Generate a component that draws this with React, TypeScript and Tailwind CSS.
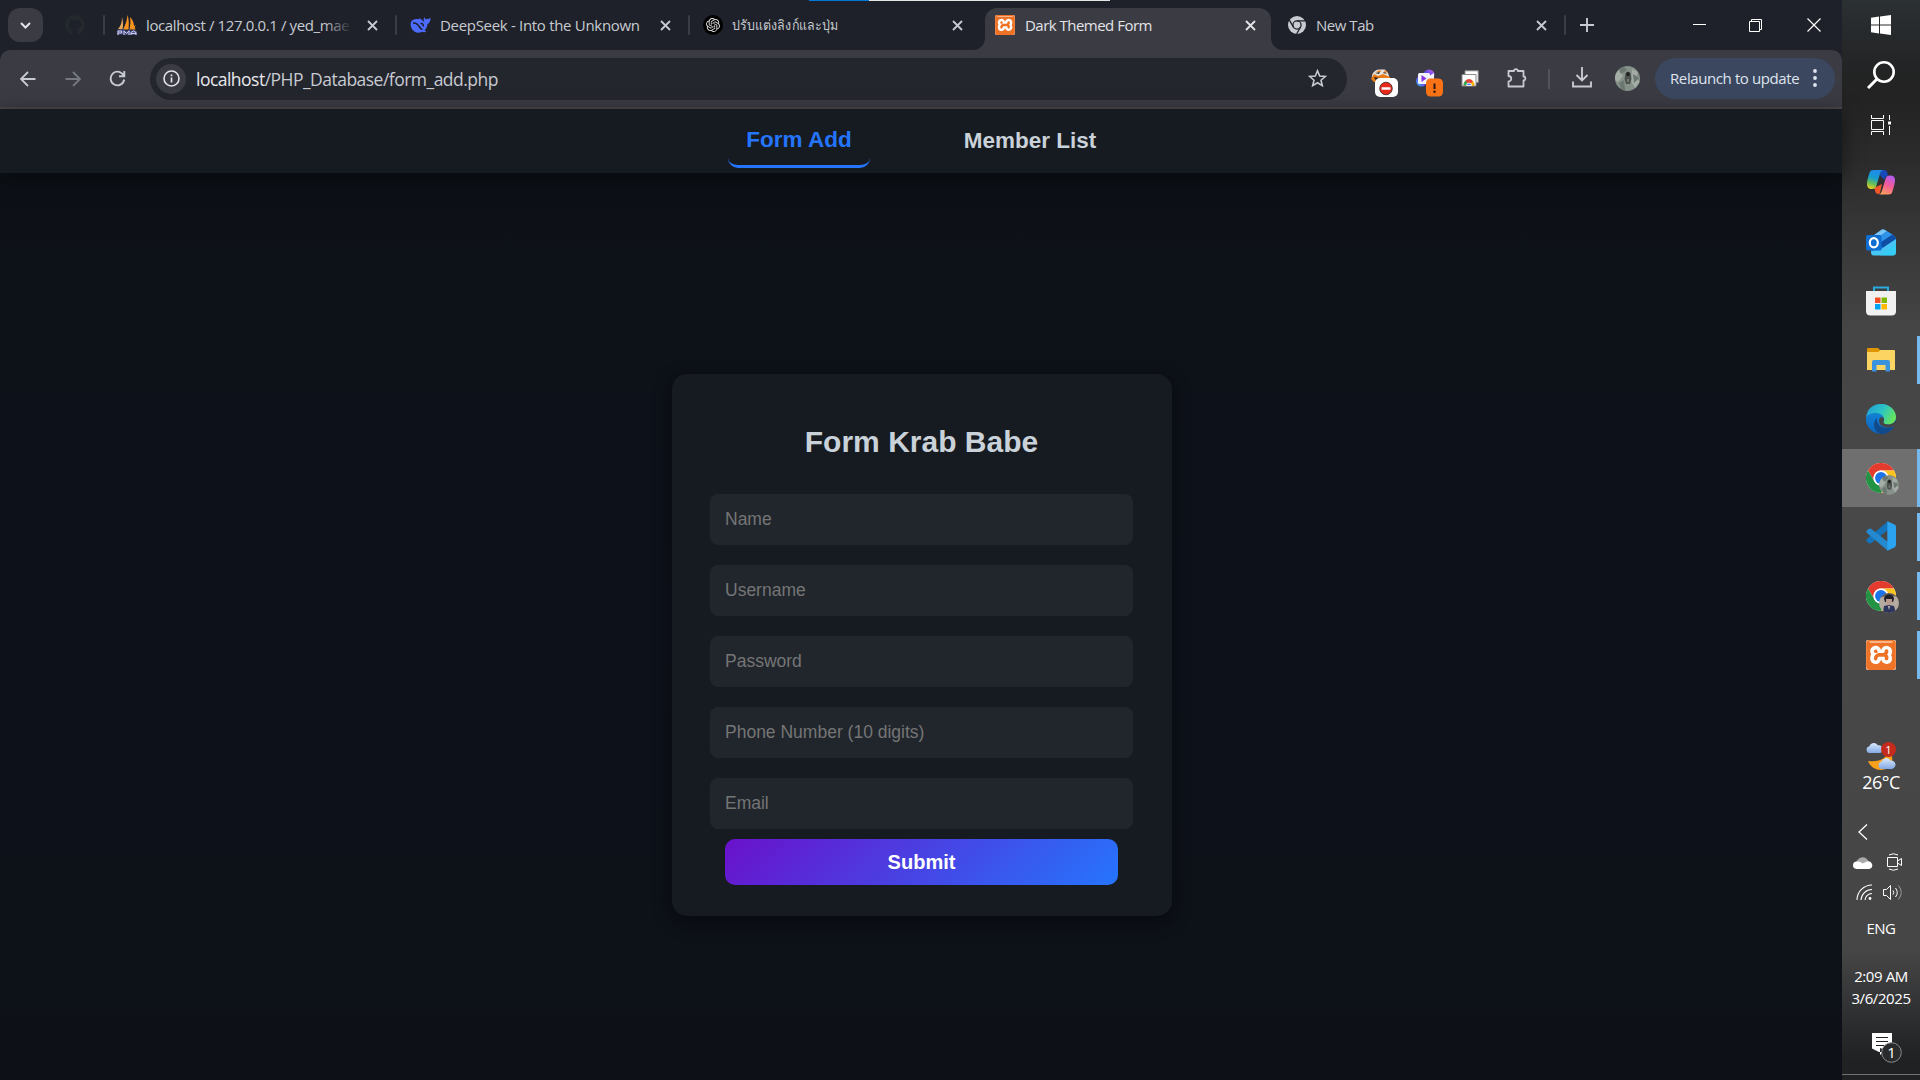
import type { ReactNode } from "react";
import { FaGithub } from "react-icons/fa";
import { SiOpenai, SiXampp } from "react-icons/si";

const uiFont = "font-['Open_Sans','Noto_Sans',sans-serif]";

function CloseIcon({ color = "#c7cad1" }: { color?: string }) {
  return (
    <svg width="11" height="11" viewBox="0 0 11 11" className="shrink-0">
      <path d="M1 1L10 10M10 1L1 10" stroke={color} strokeWidth="1.8" />
    </svg>
  );
}

function Separator() {
  return <div className="h-5 w-0.5 shrink-0 rounded-full bg-[#3b3d46]" />;
}

function Xampp({ size }: { size: number }) {
  return (
    <div className="relative overflow-hidden rounded-[2px] bg-white" style={{ width: size, height: size }}>
      <SiXampp size={size} color="#ee7326" />
      <div className="absolute inset-x-[10%] top-[4%] h-[8%] rounded-b-full bg-[#f9b58a]" />
    </div>
  );
}

function PmaIcon() {
  return (
    <svg width="20" height="20" viewBox="0 0 20 20">
      <path d="M5 2C5 7 4 11 1 14L5.500 14.500C6.500 10 6 6 5 2Z" fill="#e8a95b" />
      <path d="M10.500 0C10 6 8 11 6 14.500H11.500C12 9 12 4 10.500 0Z" fill="#f7931e" />
      <path d="M13 2C14 7 13 11 12.500 14.500H19C17 13 18 11 19 10L17 11C17 7 15 4 13 2Z" fill="#f9951d" />
      <path d="M1 20V16H4.500V18H1M7 20V16L9.500 18.500L12 16V20M14 20V17.500L16.500 16L19 17.500V20M14 18.500H19" fill="none" stroke="#4b4f83" strokeWidth="2.600" />
      <path d="M1 20V16H4.500V18H1M7 20V16L9.500 18.500L12 16V20M14 20V17.500L16.500 16L19 17.500V20M14 18.500H19" fill="none" stroke="#c9cdea" strokeWidth="1" />
    </svg>
  );
}

function DeepSeekIcon() {
  return (
    <svg width="21" height="20" viewBox="0 0 21 20">
      <path
        d="M1 7C3 4 6 3.500 9 4.500C8.500 3.500 9.500 3 10.500 3.800C12 5 13.500 6.500 14.500 7.500C13.300 5.500 13.500 3.500 14.500 2C14.800 3.500 15.500 4.300 16.500 4.200C18 4.200 19 3.800 20.500 2.800C20.600 6 19.500 8.300 17.500 9C17.200 12 16 14 14.500 15.500L16.500 16.500C15 17.700 13 17.200 12 16.800C8.500 18.800 4 17.500 2 14C.5 11.500.3 9 1 7Z"
        fill="#4d6bfe"
      />
      <path d="M3 8C6 7.500 8 9.500 9.500 12C10.500 13.700 11.500 14.500 12.500 14.200M10.500 8.500C12.500 8 13.500 9.500 13.300 11.500" fill="none" stroke="#1e2129" strokeWidth="1.500" />
      <path d="M3 9C5.500 9 7.500 11 9 13.500C6 14.500 3.500 12.500 3 9Z" fill="#4d6bfe" />
    </svg>
  );
}

function MonoChrome() {
  return (
    <svg width="18" height="18" viewBox="0 0 18 18">
      <circle cx="9" cy="9" r="9" fill="#c7cad1" />
      <circle cx="9" cy="9" r="4.100" fill="none" stroke="#1e2129" strokeWidth="1.300" />
      <path d="M9 4.900H17M5.450 11.050L1.400 4.100M12.550 11.050L8.600 18" stroke="#1e2129" strokeWidth="1.300" />
    </svg>
  );
}

function Tab({ icon, title, titleClass, width, fade }: { icon: ReactNode; title: string; titleClass: string; width: string; fade?: boolean }) {
  return (
    <div className={`flex h-full items-center ${width}`}>
      <div className="flex w-[21px] shrink-0 items-center justify-center">{icon}</div>
      <div className={`relative ml-[9px] mr-auto overflow-hidden whitespace-nowrap leading-6 text-[#c7cad1] ${titleClass}`}>
        {title}
        {fade && <span className="absolute inset-y-0 right-0 w-7 bg-gradient-to-r from-transparent to-[#1e2129]" />}
      </div>
      <CloseIcon />
    </div>
  );
}

function TabStrip() {
  return (
    <div className="flex h-[50px] w-full items-center bg-[#1e2129]">
      <div className="ml-2 flex h-[34px] w-[35px] items-center justify-center rounded-xl bg-[#3a3b43]">
        <svg width="11" height="7" viewBox="0 0 11 7">
          <path d="M1 1L5.500 5.500L10 1" fill="none" stroke="#e3e3e8" strokeWidth="2" />
        </svg>
      </div>
      <FaGithub size={20} color="#24292e" className="ml-[22px] mr-[18px]" />
      <Separator />
      <Tab icon={<PmaIcon />} title="localhost / 127.0.0.1 / yed_mae" titleClass="w-[206px] text-[15px] tracking-[-0.38px]" width="ml-[11px] w-[262px]" fade />
      <div className="w-[17px]" />
      <Separator />
      <Tab icon={<DeepSeekIcon />} title="DeepSeek - Into the Unknown" titleClass="text-[15px] tracking-[-0.31px]" width="ml-[13px] w-[261px]" />
      <div className="w-[17px]" />
      <Separator />
      <Tab
        icon={
          <div className="flex h-5 w-5 items-center justify-center rounded-full bg-black">
            <SiOpenai size={14} color="#ddd" />
          </div>
        }
        title="ปรับแต่งลิงก์และปุ่ม"
        titleClass="text-[14px] origin-left scale-x-[0.89]"
        width="ml-[12px] w-[261px]"
      />
      <div className="relative ml-[22px] flex h-[42px] w-[286px] items-center self-end rounded-t-xl bg-[#3a3b43] pb-[8px] pr-[15px]">
        <svg className="absolute -left-3 bottom-0" width="12" height="12" viewBox="0 0 12 12">
          <path d="M12 0V12H0A12 12 0 0 0 12 0Z" fill="#3a3b43" />
        </svg>
        <svg className="absolute -right-3 bottom-0" width="12" height="12" viewBox="0 0 12 12">
          <path d="M0 0V12H12A12 12 0 0 1 0 0Z" fill="#3a3b43" />
        </svg>
        <div className="ml-[10px]">
          <Xampp size={20} />
        </div>
        <div className="ml-2.5 mr-auto text-[15px] leading-6 tracking-[-0.52px] text-[#e3e3e8]">Dark Themed Form</div>
        <CloseIcon color="#e3e3e8" />
      </div>
      <Tab icon={<MonoChrome />} title="New Tab" titleClass="text-[15px] tracking-[-0.47px]" width="ml-[15px] w-[261px]" />
      <div className="w-[17px]" />
      <Separator />
      <svg className="ml-[14px]" width="14" height="14" viewBox="0 0 14 14">
        <path d="M7 0V14M0 7H14" stroke="#c7cad1" strokeWidth="1.900" />
      </svg>
      <svg className="ml-auto mr-[43px]" width="13" height="13" viewBox="0 0 13 13">
        <path d="M0 5.500H13" stroke="#fff" />
      </svg>
      <svg className="mr-[45px]" width="13" height="13" viewBox="0 0 13 13">
        <path d="M.5 2.500H10.500V12.500H.5ZM2.500 2.500V.5H12.500V10.500H10.500" fill="none" stroke="#fff" />
      </svg>
      <svg className="mr-[21px]" width="14" height="14" viewBox="0 0 14 14">
        <path d="M.5.5L13.500 13.500M13.500.5L.5 13.500" stroke="#fff" strokeWidth="1.200" />
      </svg>
    </div>
  );
}

function Avatar({ size, warm }: { size: number; warm?: boolean }) {
  return warm ? (
    <svg width={size} height={size} viewBox="0 0 20 20">
      <clipPath id="av2"><circle cx="10" cy="10" r="10" /></clipPath>
      <g clipPath="url(#av2)">
        <rect width="20" height="20" fill="#b5aaa0" />
        <path d="M0 0H20V4L14 3L7 3L0 5Z" fill="#5b5653" />
        <path d="M5 6C5 0 15 0 15 6L14 9H6Z" fill="#20202b" />
        <path d="M7 6H13V10L10 12L7 10Z" fill="#b79a8c" />
        <path d="M4 20L5 13L10 12L15 13L17 20Z" fill="#2e355c" />
        <path d="M9 13L10 17L11 13Z" fill="#c9c4c4" />
      </g>
    </svg>
  ) : (
    <svg width={size} height={size} viewBox="0 0 25 25">
      <clipPath id="av1"><circle cx="12.500" cy="12.500" r="12.500" /></clipPath>
      <g clipPath="url(#av1)">
        <rect width="25" height="25" fill="#869189" />
        <path d="M0 5L5 3L8 10L3 16L0 14ZM17 3L23 6L21 12L25 16L20 22L16 15Z" fill="#a3aca5" />
        <path d="M8 0L12 4L6 8L4 4ZM4 17L9 14L10 24L6 23ZM18 8L24 12L19 17Z" fill="#6b7770" />
        <path d="M10.500 7Q13 4 15.500 7L16.500 13L15 18H11L9.500 13Z" fill="#4c524f" />
        <path d="M11.500 7Q13 5 14.500 7V10H11.500Z" fill="#1f1f20" />
        <path d="M12 13H14V16H12Z" fill="#77796f" />
      </g>
    </svg>
  );
}

function ExtFox() {
  return (
    <svg width="28" height="28" viewBox="0 0 28 28">
      <path d="M1 10C0 4 4 1 8 .5H14L17 4L19 10Z" fill="#e8e2dc" />
      <path d="M0 10L3 5L7 7L12 5L19 8V13H3Z" fill="#e87b17" />
      <path d="M5 3L9 1L10 3ZM13 1L17 3L14 4Z" fill="#e87b17" />
      <path d="M4 4L9 3L8 5ZM13 3L16 5L12 4ZM3 8L9 9L5 12Z" fill="#33261d" />
      <rect x="4" y="9" width="23" height="19" rx="5" fill="#fff" />
      <circle cx="15" cy="19.500" r="6.300" fill="#e8291c" stroke="#3a2a2a" strokeWidth=".8" />
      <rect x="10.500" y="18.200" width="9" height="2.600" rx=".6" fill="#fff" />
    </svg>
  );
}

function ExtVideo() {
  return (
    <svg width="28" height="28" viewBox="0 0 28 28">
      <defs>
        <linearGradient id="vid" x1="0" x2="1" y1="1" y2="0">
          <stop stopColor="#25c4f4" />
          <stop offset=".5" stopColor="#6a45f0" />
          <stop offset="1" stopColor="#c86af0" />
        </linearGradient>
      </defs>
      <circle cx="5.500" cy="12" r="5.500" fill="url(#vid)" />
      <circle cx="13" cy="6" r="5.500" fill="url(#vid)" />
      <rect x="2" y="4" width="12" height="11" rx="1.500" fill="#f4f4fb" />
      <path d="M18 4V12L14 9.500V6.500Z" fill="#f4f4fb" />
      <path d="M5.500 6L10.500 9.500L5.500 13Z" fill="#8a35e0" />
      <rect x="10" y="9.500" width="17" height="18" rx="4.500" fill="#f97316" />
      <path d="M18.500 14.500V20" stroke="#2b1a10" strokeWidth="2" />
      <circle cx="18.500" cy="22.800" r="1.200" fill="#2b1a10" />
    </svg>
  );
}

function ExtScreens() {
  return (
    <svg width="18" height="17" viewBox="0 0 18 17">
      <path d="M4 .8H17.200V12.500H4Z" fill="#fff" stroke="#8a8a8e" />
      <path d="M1 4.500H15V16H1Z" fill="#fff" stroke="#8a8a8e" />
      <path d="M2.500 15.500A5.500 6.500 0 0 1 13.500 15.500Z" fill="#e94234" />
      <path d="M2.500 15.500A5.500 6.500 0 0 1 4.500 10.500L8 15.500Z" fill="#34a853" />
      <path d="M13.500 15.500A5.500 6.500 0 0 0 12 11L8 15.500Z" fill="#fbbc05" />
      <path d="M5.500 15.500A2.500 2.500 0 0 1 10.500 15.500Z" fill="#4285f4" stroke="#fff" strokeWidth=".8" />
    </svg>
  );
}

function Toolbar() {
  return (
    <div className="w-full bg-[#1e2129]">
      <div className="flex h-[59px] items-center rounded-t-[10px] border-b-2 border-[#4a4749] bg-[#3a3b43]">
        <svg className="ml-5" width="16" height="16" viewBox="0 0 16 16">
          <path d="M15.500 8H1.500M8 1L1 8L8 15" fill="none" stroke="#c7cad1" strokeWidth="1.800" />
        </svg>
        <svg className="ml-[29px]" width="16" height="16" viewBox="0 0 16 16">
          <path d="M.5 8H14.500M8 1L15 8L8 15" fill="none" stroke="#777980" strokeWidth="1.800" />
        </svg>
        <svg className="ml-[28px]" width="17" height="17" viewBox="0 0 17 17">
          <path d="M14.800 6A6.800 6.800 0 1 0 15.200 9.500M15.300 1V6.200H10" fill="none" stroke="#c7cad1" strokeWidth="1.900" />
        </svg>
        <div className="ml-[24px] flex h-[42px] w-[1197px] items-center rounded-full bg-[#24262e] pl-1.5 pr-5">
          <div className="flex h-[30px] w-[30px] items-center justify-center rounded-full bg-[#3a3b43]">
            <svg width="17" height="17" viewBox="0 0 17 17">
              <circle cx="8.500" cy="8.500" r="7.500" fill="none" stroke="#e3e3e8" strokeWidth="1.600" />
              <path d="M8.500 7.500V12.500M8.500 4.500V6.300" stroke="#e3e3e8" strokeWidth="1.700" />
            </svg>
          </div>
          <div className="ml-[10px] text-[17.500px] leading-6 tracking-[-0.52px] text-[#c7cad1]">
            <span className="text-[#e8e8ec]">localhost</span>/PHP_Database/form_add.php
          </div>
          <svg className="ml-auto" width="19" height="19" viewBox="0 0 19 19">
            <path d="M9.500 1.800L11.700 7L17.300 7.500L13 11.200L14.300 16.700L9.500 13.800L4.700 16.700L6 11.200L1.700 7.500L7.300 7Z" fill="none" stroke="#c7cad1" strokeWidth="1.600" />
          </svg>
        </div>
        <div className="ml-[24px] mt-[8px]"><ExtFox /></div>
        <div className="ml-[17px] mt-[8px]"><ExtVideo /></div>
        <div className="ml-[17px]"><ExtScreens /></div>
        <svg className="-mt-[3px] ml-[28px]" width="21" height="21" viewBox="0 0 21 21">
          <path d="M1.500 4H7A1.900 1.900 0 0 1 10.800 4H16.500V9.500A1.900 1.900 0 0 1 16.500 13.300V19.500H1.500V14.500A2.700 2.700 0 0 0 1.500 9Z" fill="none" stroke="#c7cad1" strokeWidth="1.800" strokeLinejoin="round" />
        </svg>
        <div className="ml-[20px] h-5 w-0.5 bg-[#51535c]" />
        <svg className="-mt-[2px] ml-[22px]" width="20" height="21" viewBox="0 0 20 21">
          <path d="M10 0V13M4.500 8L10 13.500L15.500 8M1 14.500V19.500H19V14.500" fill="none" stroke="#c7cad1" strokeWidth="1.900" />
        </svg>
        <div className="-mt-[1px] ml-[23px]"><Avatar size={25} /></div>
        <div className="ml-[15px] flex h-[41px] w-[180px] items-center rounded-full bg-[#3b475f] pb-[1px] pl-[15px]">
          <span className="whitespace-nowrap text-[15px] leading-6 tracking-[-0.4px] text-[#dfe4ee]">Relaunch to update</span>
          <svg className="ml-auto mr-[18px]" width="4" height="18" viewBox="0 0 4 18">
            <circle cx="2" cy="2" r="1.900" fill="#dfe4ee" /><circle cx="2" cy="9" r="1.900" fill="#dfe4ee" /><circle cx="2" cy="16" r="1.900" fill="#dfe4ee" />
          </svg>
        </div>
      </div>
    </div>
  );
}

function Page() {
  const fields = ["Name", "Username", "Password", "Phone Number (10 digits)", "Email"];
  return (
    <div className="flex flex-1 flex-col bg-[#0d1117] font-['Liberation_Sans',Arial,sans-serif]">
      <nav className="z-10 flex h-[64px] shrink-0 justify-center gap-[75px] bg-[#161b21] pl-[1px] text-[22.500px] font-bold shadow-[0_5px_19px_rgba(0,0,0,0.5)]">
        <a className="flex h-[59px] w-[142px] items-center justify-center rounded-[10px] border-b-[3px] border-[#2575fc] pt-[6px] text-[#2575fc]">Form Add</a>
        <a className="flex h-[59px] w-[170px] items-center justify-center pt-[4px] text-[#c9d1d9]">Member List</a>
      </nav>
      <main className="flex flex-1 justify-center bg-gradient-to-b from-[#0d1117] via-[#0d111a] to-[#0d1117] pl-[2px] pt-[201px]">
        <form className="flex h-[542px] w-[500px] flex-col items-center rounded-[15px] bg-[#161b21] pl-[38px] pr-[39px] shadow-[0_5px_19px_rgba(0,0,0,0.45)]">
          <h1 className="mt-[50px] h-[35px] text-[30px] font-bold leading-[35px] text-[#c9d1d9]">Form Krab Babe</h1>
          <div className="mt-[35px] flex w-full flex-col gap-5">
            {fields.map((f) => (
              <input key={f} placeholder={f} className="h-[51px] w-full rounded-lg bg-[#21262d] pl-[15px] text-[17.500px] placeholder:text-[#757575]" />
            ))}
          </div>
          <button type="button" className="mt-[10px] h-[46px] w-[393px] rounded-[10px] bg-[linear-gradient(135deg,#6a11cb,#2575fc)] text-[20px] font-bold text-white">Submit</button>
        </form>
      </main>
    </div>
  );
}

function Chrome() {
  return (
    <svg width="30" height="30" viewBox="0 0 48 48">
      <circle cx="24" cy="24" r="24" fill="#fff" />
      <path d="M3.200 12A24 24 0 0 1 44.800 12H24A12 12 0 0 0 13.600 30Z" fill="#e33b2e" />
      <path d="M44.800 12A24 24 0 0 1 24 48L34.400 30A12 12 0 0 0 24 12Z" fill="#fcc31e" />
      <path d="M24 48A24 24 0 0 1 3.200 12L13.600 30A12 12 0 0 0 34.400 30Z" fill="#229342" />
      <circle cx="24" cy="24" r="12" fill="#fff" />
      <circle cx="24" cy="24" r="9.500" fill="#1a73e8" />
    </svg>
  );
}

function Slot({ h, children, open, active }: { h: string; children: ReactNode; open?: boolean; active?: boolean }) {
  return (
    <div className={`relative flex w-full shrink-0 items-center justify-center ${h} ${active ? "bg-[#6f6f6f]" : ""}`}>
      {children}
      {open && <div className={`absolute right-0 w-[3px] bg-[#76b9ed] ${active ? "h-full" : "h-12"}`} />}
    </div>
  );
}

function Cloud({ w, id }: { w: number; id: string }) {
  return (
    <svg width={w} height={w * 0.66} viewBox="0 0 18 12">
      <defs>
        <linearGradient id={id} x1="0" x2="0" y1="0" y2="1"><stop stopColor="#dbe9fd" /><stop offset="1" stopColor="#82a9e4" /></linearGradient>
      </defs>
      <path d="M4 12A3.800 3.800 0 0 1 3.500 4.500A5 5 0 0 1 12.500 3.500A4.200 4.200 0 0 1 14 12Z" fill={`url(#${id})`} />
    </svg>
  );
}

function Taskbar() {
  return (
    <aside className="flex h-full w-[78px] shrink-0 flex-col items-center bg-[linear-gradient(180deg,#2b3033_0,#232425_65px,#232323_100px,#303030_190px,#454545_330px,#484848_500px,#464646_950px,#303133_1010px,#1f2123_1060px,#1f2123_1080px)] text-white">
      <Slot h="h-[50px]">
        <svg width="20" height="20" viewBox="0 0 20 20" fill="#fff">
          <path d="M0 2.800L8 1.600V9.500H0ZM9 1.400L20 0V9.500H9ZM0 10.500H8V18.400L0 17.200ZM9 10.500H20V20L9 18.600Z" />
        </svg>
      </Slot>
      <Slot h="h-[50px]">
        <svg width="28" height="28" viewBox="0 0 28 28">
          <circle cx="17" cy="11" r="9.700" fill="none" stroke="#fff" strokeWidth="2.600" />
          <path d="M10 18L1 27" stroke="#fff" strokeWidth="3" />
        </svg>
      </Slot>
      <Slot h="h-[49px]">
        <svg width="20" height="20" viewBox="0 0 20 20" fill="none" stroke="#fff" strokeWidth="1">
          <path d="M.5 0V3.500H12.500V0M.5 5.500H12.500V14.500H.5ZM.5 20V16.500H12.500V20M18.500 0V5M18.500 11V20" />
          <path d="M17 6.500H20V9.500H17Z" fill="#fff" stroke="none" />
        </svg>
      </Slot>
      <Slot h="h-[66px]">
        <svg width="28" height="26" viewBox="0 0 28 26">
          <defs>
            <linearGradient id="cp1" x1=".5" x2=".2" y1="0" y2="1"><stop stopColor="#2089e8" /><stop offset=".4" stopColor="#169cd1" /><stop offset=".7" stopColor="#62bd58" /><stop offset="1" stopColor="#f2cf1b" /></linearGradient>
            <linearGradient id="cp2" x1=".7" x2=".3" y1="0" y2="1"><stop stopColor="#b65cf0" /><stop offset=".45" stopColor="#f05a9b" /><stop offset="1" stopColor="#ff9d5c" /></linearGradient>
          </defs>
          <path d="M14 1H17C19.500 1 20 2.500 20.700 5L21 6H24C20 6 18 8 17 11L13 6Z" fill="#1749b8" />
          <path d="M7 19L15 15L13 24C12 25.500 10 25 9 24C7.800 22.500 8 20 7 19Z" fill="#f1562a" />
          <path d="M6.500 1H17C14.500 1 13.500 3 12.800 5.500L9.500 16.500C8.800 19 7.500 20 5 20C1.500 20 0 18 0 15C0 11.500 1.700 6 2.700 3.500C3.400 1.700 4.500 1 6.500 1Z" fill="url(#cp1)" />
          <path d="M21.500 25.500H11C13.500 25.500 14.500 23.500 15.200 21L18.500 10C19.200 7.500 20.500 6.500 23 6.500C26.500 6.500 28 8 28 11C28 14.500 26.300 20 25.300 23C24.600 24.800 23.500 25.500 21.500 25.500Z" fill="url(#cp2)" />
        </svg>
      </Slot>
      <Slot h="h-[54px]">
        <svg width="30" height="27" viewBox="0 0 30 27">
          <path d="M5 8L15.500 .7Q17 -.2 18.500 .7L28 6.500Q30 8 30 10V24L5 25Z" fill="#1c6fd0" />
          <path d="M6 7.500L15.500 .7Q17 -.2 18.500 .7L21 2.200L8 11Z" fill="#7cc4f5" />
          <path d="M8 11L21 2.200L26.500 5.500L13 14.500Z" fill="#2f93e8" />
          <path d="M13 14.500L26.500 5.500Q29.500 7.500 30 10L17 19Z" fill="#0e4fa5" />
          <path d="M5 22L15 20L30 10V23Q30 26.500 26.500 26.500H8Q5 26.500 5 23Z" fill="#47c5f3" />
          <path d="M14 26.500L30 15V23Q30 26.500 26.500 26.500Z" fill="#2bd2f5" opacity=".6" />
          <rect y="6" width="15.500" height="15.500" rx="1.500" fill="#0f6cd0" />
          <ellipse cx="7.800" cy="13.700" rx="4" ry="4.600" fill="none" stroke="#fff" strokeWidth="2.200" />
        </svg>
      </Slot>
      <Slot h="h-[65px]">
        <svg className="-mt-[1px]" width="30" height="30" viewBox="0 0 30 30">
          <path d="M8 6V1.500H22V6" fill="none" stroke="#2aa9e0" strokeWidth="2" />
          <path d="M0 5H30V25Q30 29.500 25.500 29.500H4.500Q0 29.500 0 25Z" fill="#f1f1f1" />
          <path d="M9 11.500H14.500V17H9Z" fill="#f25022" /><path d="M15.500 11.500H21V17H15.500Z" fill="#7fba00" />
          <path d="M9 18H14.500V23.500H9Z" fill="#00a4ef" /><path d="M15.500 18H21V23.500H15.500Z" fill="#ffb900" />
        </svg>
      </Slot>
      <Slot h="h-[52px]" open>
        <svg className="-mt-[1px]" width="28" height="24" viewBox="0 0 28 24">
          <path d="M0 1Q0 0 1 0H11L13.500 2.500V6H0Z" fill="#dd9500" />
          <path d="M0 4H11L13.500 2H27Q28 2 28 3V22H0Z" fill="#fcd462" />
          <path d="M5 23.500V14Q5 12 7 12H21Q23 12 23 14V23.500H18.500V17H9.500V23.500Z" fill="#3c93dd" />
        </svg>
      </Slot>
      <Slot h="h-[63px]">
        <svg className="mt-[3px]" width="30" height="30" viewBox="0 0 30 30">
          <defs>
            <linearGradient id="ed1" x1="0" x2="1" y1=".2" y2=".6"><stop stopColor="#229fd8" /><stop offset=".5" stopColor="#2cc3c5" /><stop offset="1" stopColor="#69e657" /></linearGradient>
            <linearGradient id="ed2" x1="0" x2="0" y1="0" y2="1"><stop stopColor="#1690dd" /><stop offset="1" stopColor="#0c62be" /></linearGradient>
          </defs>
          <circle cx="15" cy="15" r="15" fill="url(#ed2)" />
          <path d="M.3 13C1 5 7 0 15 0C24 0 30 6.500 30 13C30 18 26 20.500 22 20.500C18.500 20.500 17 19 17.500 18C19 15.500 18 11 13 9.500C8 8.500 3 9 .3 13Z" fill="url(#ed1)" />
          <path d="M11 14C10 19 14 24 20 24C24 24 26 23 28 22C25 28 19 31 14 29.800C9 28 7 22 8.500 18C9 16.200 10 14.700 11 14Z" fill="#114a8b" />
          <path d="M17.500 18C17 19.500 19 20.500 22 20.500C26 20.500 28.500 18.500 30 16V22L27.500 22.500C20 25.500 13 22 13 17C13 14 15 12.500 17 13Q18.500 15.500 17.500 18Z" fill="#454545" />
        </svg>
      </Slot>
      <Slot h="h-[58px]" open active>
        <div className="relative -mt-[1px]"><Chrome /><div className="absolute -bottom-[2px] -right-[3px]"><Avatar size={20} /></div></div>
      </Slot>
      <Slot h="h-[59px]" open>
        <svg className="-mt-[1px]" width="30" height="30" viewBox="0 0 100 100">
          <path d="M73 1V30L17 74Q12 77 8 73L3 68Q-1 64 3 60Z" fill="#1473ba" />
          <path d="M73 99V70L17 26Q12 23 8 27L3 32Q-1 36 3 40Z" fill="#2489ce" />
          <path d="M71 1L95 12Q100 15 100 20V80Q100 85 95 88L71 99Z" fill="#2ba3f0" />
        </svg>
      </Slot>
      <Slot h="h-[59px]" open>
        <div className="relative"><Chrome /><div className="absolute -bottom-[2px] -right-[3px]"><Avatar size={20} warm /></div></div>
      </Slot>
      <Slot h="h-[59px]" open><Xampp size={30} /></Slot>
      <div className="relative mt-[58px] h-[30px] w-[30px]">
        <svg className="absolute left-[2px] top-[3px]" width="28" height="28" viewBox="0 0 28 28">
          <path d="M20 3C20 14 12 17 0 16C4 26 15 27 21 22C26 18 25 8 20 3Z" fill="#f9a11b" />
        </svg>
        <div className="absolute left-0 top-0"><Cloud w={17} id="c1" /></div>
        <div className="absolute left-[12px] top-[15px]"><Cloud w={18} id="c2" /></div>
        <div className="absolute right-0 top-0 flex h-[15px] w-[15px] items-center justify-center rounded-full bg-[#c42b1c] text-[11px] leading-none">1</div>
      </div>
      <div className="-mt-[2px] text-[18px] leading-6 tracking-[-0.5px]">26°C</div>
      <div className="mt-[30px] flex w-full pl-[16px]">
        <svg width="10" height="16" viewBox="0 0 10 16"><path d="M9 .5L1 8L9 15.500" fill="none" stroke="#fff" strokeWidth="1.300" /></svg>
      </div>
      <div className="mt-[13px] flex h-[19px] w-full items-center pl-[11px]">
        <svg width="20" height="13" viewBox="0 0 20 13">
          <path d="M4 10A4 4 0 0 1 4.500 4A6 6 0 0 1 15 4.500L18 9L10 12Z" fill="#a9a9a9" />
          <path d="M3.500 13A3.500 3.500 0 0 1 4 5.500Q7 5 9.500 7.500L14 5.500A3.800 3.800 0 0 1 16.500 13Z" fill="#fff" />
        </svg>
        <svg className="-mt-[1px] ml-[14px]" width="15" height="18" viewBox="0 0 15 18" fill="none" stroke="#fff">
          <path d="M.5 4.500H10.500V13.500H.5ZM10.500 8L14.500 5.500V12.500L10.500 10M2 2Q6 -.5 11 2M2 16Q6 18.500 11 16" />
        </svg>
      </div>
      <div className="mt-[11px] flex h-[19px] w-full items-center pl-[14px]">
        <svg width="17" height="17" viewBox="0 0 17 17" fill="none" stroke="#fff" strokeWidth="1.100">
          <path d="M1 16A15 15 0 0 1 16 1M5 16A11 11 0 0 1 16 5.500M9 16A7 7 0 0 1 16 9.500" />
          <circle cx="14" cy="14.500" r="1.400" fill="#fff" stroke="none" />
        </svg>
        <svg className="ml-[10px]" width="21" height="17" viewBox="0 0 21 17" fill="none" stroke="#fff">
          <path d="M.5 5.500H3.500L7.500 1.500V15.500L3.500 11.500H.5ZM10 6.500Q11.500 8.500 10 10.500M12.500 4Q16 8.500 12.500 13" />
          <path d="M15.500 1.500Q21 8.500 15.500 15.500" stroke="#999" />
        </svg>
      </div>
      <div className="mt-[14px] text-[15px] leading-6 tracking-[-0.5px]">ENG</div>
      <div className="mt-[25px] text-center text-[15px] leading-[22px] tracking-[-0.42px]">2:09 AM<br />3/6/2025</div>
      <svg className="ml-[12px] mt-[24px]" width="31" height="32" viewBox="0 0 31 32">
        <path d="M0 0H20V19H13L8 19H7L0 15.500ZM8 15V22L13 17Z" fill="#fff" />
        <path d="M4 4.500H16M4 8.500H16M4 12.500H12" stroke="#222" />
        <circle cx="19.500" cy="19.500" r="9.800" fill="#2a2b2d" stroke="#8b8b8b" />
        <text x="19.500" y="25" textAnchor="middle" fontSize="15" fill="#fff">1</text>
      </svg>
      <div className="mb-[5px] mt-auto h-px w-full bg-[#707172]" />
    </aside>
  );
}

export default function App() {
  return (
    <div className={`relative flex h-[1080px] w-[1920px] overflow-hidden bg-black ${uiFont}`}>
      <div className="flex h-full w-[1842px] flex-col">
        <TabStrip />
        <Toolbar />
        <Page />
      </div>
      <Taskbar />
      <div className="absolute left-[809px] top-0 flex h-px w-[301px] bg-[#e5e5e5]">
        <div className="h-px w-[60px] bg-[#0078d7]" />
      </div>
    </div>
  );
}
